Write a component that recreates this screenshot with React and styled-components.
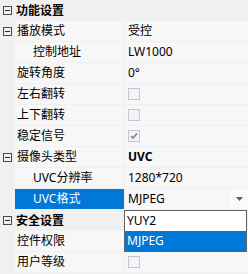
import React from "react";
import styled, { createGlobalStyle } from "styled-components";

const Global = createGlobalStyle`
  html, body { margin: 0; padding: 0; background: #f0f0f0; }
`;

const Grid = styled.div`
  position: relative;
  width: 248px;
  background: #f0f0f0;
  font-family: "Noto Sans", "Noto Sans CJK SC", sans-serif;
  font-size: 12px;
  color: #000;
`;

const CategoryRow = styled.div`
  display: grid;
  grid-template-columns: 14px 1fr;
  height: 21px;
  align-items: center;
  font-weight: bold;
`;

const PropRow = styled.div`
  display: grid;
  grid-template-columns: 14px 109px 124px;
  column-gap: 1px;
  padding-bottom: 1px;
  height: 20px;
`;

const Gutter = styled.div`
  display: flex;
  align-items: center;
  justify-content: center;
  height: 100%;
`;

const Toggle = styled.span`
  box-sizing: border-box;
  width: 9px;
  height: 9px;
  border: 1px solid #4a4a4a;
  display: flex;
  align-items: center;
  justify-content: center;
  &::after {
    content: "";
    width: 5px;
    height: 1px;
    background: #2a2a2a;
  }
`;

const Label = styled.div`
  line-height: 20px;
  padding-left: 2px;
  white-space: nowrap;
`;

const NameCell = styled.div`
  background: ${(p) => (p.$selected ? "#0078d7" : "#f7f7f7")};
  color: ${(p) => (p.$selected ? "#fff" : "#000")};
  line-height: 20px;
  padding-left: ${(p) => (p.$indent ? "18px" : "2px")};
  white-space: nowrap;
`;

const ValueCell = styled.div`
  background: #f7f7f7;
  line-height: 20px;
  padding-left: 3px;
  display: flex;
  align-items: center;
  justify-content: space-between;
  font-weight: ${(p) => (p.$bold ? "bold" : "normal")};
`;

const Check = styled.span`
  box-sizing: border-box;
  width: 12px;
  height: 12px;
  border: 1px solid #c6c6d2;
  background: #f3f3f7;
  display: flex;
  align-items: center;
  justify-content: center;
`;

const DropButton = styled.div`
  width: 19px;
  height: 20px;
  background: #fbfbfb;
  display: flex;
  align-items: center;
  justify-content: center;
`;

const Popup = styled.div`
  position: absolute;
  left: 124px;
  top: 210px;
  width: 123px;
  box-sizing: border-box;
  border: 1px solid #646464;
  background: #fff;
`;

const PopupItem = styled.div`
  height: 20px;
  line-height: 20px;
  padding-left: 2px;
  background: ${(p) => (p.$selected ? "#0078d7" : "#fff")};
  color: ${(p) => (p.$selected ? "#fff" : "#000")};
`;

const Category = ({ children }) => (
  <CategoryRow>
    <Gutter>
      <Toggle />
    </Gutter>
    <Label>{children}</Label>
  </CategoryRow>
);

const Prop = ({ name, value, expandable, indent, selected, bold }) => (
  <PropRow>
    <Gutter>{expandable && <Toggle />}</Gutter>
    <NameCell $indent={indent} $selected={selected}>
      {name}
    </NameCell>
    <ValueCell $bold={bold}>{value}</ValueCell>
  </PropRow>
);

const CheckBox = ({ checked }) => (
  <Check>
    {checked && (
      <svg width="8" height="8" viewBox="0 0 8 8">
        <path d="M1 4 L3 6 L7 1.5" fill="none" stroke="#7a7a7a" strokeWidth="1.3" />
      </svg>
    )}
  </Check>
);

export default function App() {
  return (
    <>
      <Global />
      <Grid>
        <Category>功能设置</Category>
        <Prop name="播放模式" value="受控" expandable />
        <Prop name="控制地址" value="LW1000" indent />
        <Prop name="旋转角度" value="0°" />
        <Prop name="左右翻转" value={<CheckBox />} />
        <Prop name="上下翻转" value={<CheckBox />} />
        <Prop name="稳定信号" value={<CheckBox checked />} />
        <Prop name="摄像头类型" value="UVC" expandable bold />
        <Prop name="UVC分辨率" value="1280*720" indent />
        <Prop
          name="UVC格式"
          indent
          selected
          value={
            <>
              <span>MJPEG</span>
              <DropButton>
                <svg width="7" height="4" viewBox="0 0 7 4">
                  <path d="M0 0 H7 L3.5 4 Z" fill="#606060" />
                </svg>
              </DropButton>
            </>
          }
        />
        <Category>安全设置</Category>
        <Prop name="控件权限" value="" />
        <Prop name="用户等级" value={<CheckBox />} />
        <Popup>
          <PopupItem>YUY2</PopupItem>
          <PopupItem $selected>MJPEG</PopupItem>
        </Popup>
      </Grid>
    </>
  );
}
